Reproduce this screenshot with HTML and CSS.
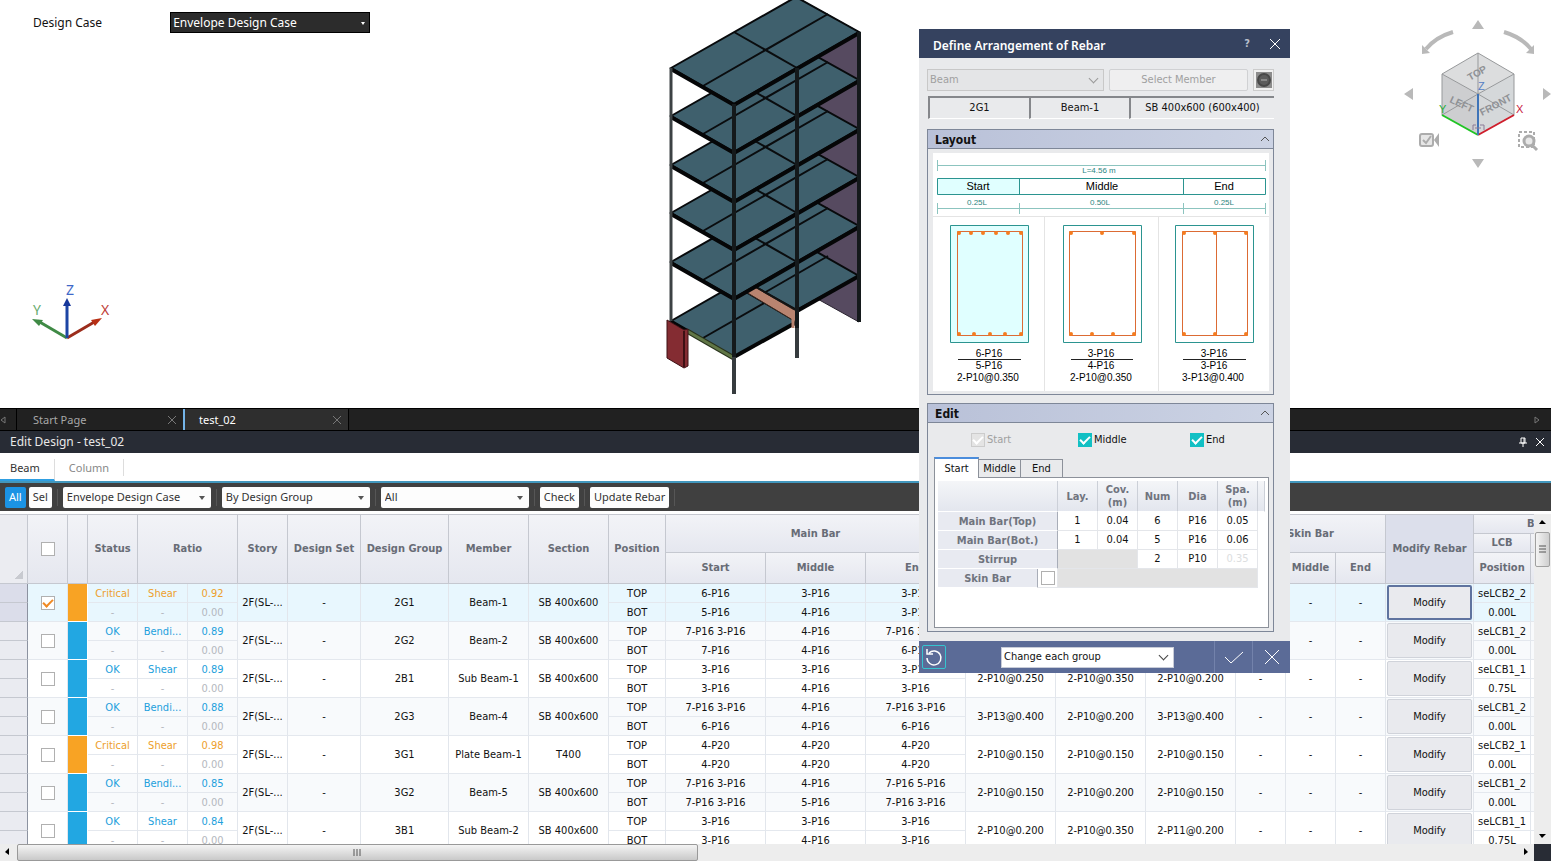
FILE: index.html
```html
<!DOCTYPE html>
<html lang="en">
<head>
<meta charset="utf-8">
<title>Edit Design - test_02</title>
<link rel="stylesheet" href="styles.css">
</head>
<body>
<main class="app">
  <section class="viewport" aria-label="Model view">
    <div class="case-bar">
      <label for="case-top">Design Case</label>
      <span class="drop drop-dark"><select id="case-top"><option>Envelope Design Case</option></select></span>
    </div>

    <svg class="axis" width="90" height="64" viewBox="0 0 90 64">
      <path d="M39 58L10 41" stroke="#3f8a45" stroke-width="3"/><path d="M4 39l11 1-4 6z" fill="#3f8a45"/>
      <path d="M39 58L68 41" stroke="#9c2d1c" stroke-width="3"/><path d="M74 38l-11 2 4 6z" fill="#b82f14"/>
      <path d="M39 58V25" stroke="#1d45a4" stroke-width="3"/><path d="M39 18l4 8h-8z" fill="#16379b"/>
      <text x="38" y="15" fill="#4068c8">Z</text><text x="5" y="35" fill="#68ac70">Y</text><text x="73" y="35" fill="#c04038">X</text>
    </svg>

    <svg class="model" width="250" height="400" viewBox="640 0 250 400">
      <defs>
        <g id="slab">
          <path d="M671 68L796 -3L859 32L734 104Z" fill="#3f606d" stroke="#080a0c" stroke-width="2"/>
          <path d="M703 86L828 14M734 32L797 68" stroke="#0a0c0e" stroke-width="2"/>
          <path d="M671 69L734 105L859 33" fill="none" stroke="#050607" stroke-width="4"/>
        </g>
      </defs>
      <path d="M796 -3L859 32V322L796 287Z" fill="#564a60" stroke="#2a2430"/>
      <path d="M671 321L734 285L797 322L734 357Z" fill="#3f606d" stroke="#080a0c" stroke-width="2"/>
      <path d="M703 338L766 302" stroke="#0a0c0e" stroke-width="2"/>
      <path d="M734 357L797 322" stroke="#050607" stroke-width="4"/>
      <path d="M671 321L690 332" stroke="#050607" stroke-width="3"/>
      <path d="M734 275L796 240L859 276L797 310Z" fill="#3f606d" stroke="#080a0c" stroke-width="2"/>
      <path d="M764 293L828 256" stroke="#0a0c0e" stroke-width="2"/>
      <path d="M797 311L859 276" stroke="#050607" stroke-width="4"/>
      <path d="M746 292L755 287L796 311V322Z" fill="#b98470" stroke="#3a2820"/>
      <path d="M793 310V328" stroke="#b98470" stroke-width="3"/>
      <path d="M754 286L796 310" stroke="#141414" stroke-width="2"/>
      <path d="M687 331L734 358" stroke="#28331c" stroke-width="5"/><path d="M687 331L734 358" stroke="#607646" stroke-width="3"/>
      <use href="#slab" y="194"/><use href="#slab" y="145"/><use href="#slab" y="97"/><use href="#slab" y="48"/><use href="#slab"/>
      <path d="M671 68V321" stroke="#3c4244" stroke-width="3"/>
      <path d="M734 104V357M797 68V330M859 32V322" stroke="#14191b" stroke-width="4"/>
      <path d="M734 357V394M797 328V358" stroke="#363b3e" stroke-width="4"/>
      <path d="M667 320L684 330L688 329V366L684 368L667 358Z" fill="#842c32" stroke="#3d1014"/><path d="M684 331V367" stroke="#3d1014" stroke-width="2"/>
    </svg>

    <svg class="cube" width="161" height="180" viewBox="1390 0 161 180">
      <g fill="#b9b9b9">
        <path d="M1478 20l6 9h-12zM1478 168l6-9h-12zM1404 94l9-6v12zM1551 94l-8-6v12z"/>
        <path d="M1422 54v-9l8 8zM1534 54v-9l-8 8z"/>
      </g>
      <path d="M1453 32Q1436 37 1426 49M1504 32Q1521 37 1531 49" fill="none" stroke="#b9b9b9" stroke-width="4"/>
      <path d="M1478 53L1514 74L1478 94L1442 74Z" fill="#dcddde"/>
      <path d="M1442 74L1478 94V135L1442 115Z" fill="#cdced0"/><path d="M1514 74L1478 94V135L1514 115Z" fill="#d5d8da"/>
      <path d="M1478 53L1514 74V115M1478 53L1442 74V115M1442 74L1478 94L1514 74M1478 53V94L1442 115M1478 94L1514 115" fill="none" stroke="#97999b"/>
      <g class="face"><text transform="translate(1470 81) rotate(-30)">TOP</text><text transform="translate(1449 102) rotate(25)">LEFT</text><text transform="translate(1482 116) rotate(-28)">FRONT</text></g>
      <path d="M1442 115L1478 135" stroke="#20c424" stroke-width="2"/><path d="M1478 135L1514 115" stroke="#cf1e2c" stroke-width="2"/><path d="M1478 94V135" stroke="#3f74b8" stroke-width="2"/>
      <path d="M1473 130v-5h3M1480 125h4v5M1475 128h6" fill="none" stroke="#8a7a96"/>
      <g class="cube-axis"><text x="1478" y="90" fill="#5580c4">Z</text><text x="1439" y="113" fill="#28ac38">Y</text><text x="1516" y="113" fill="#c82040">X</text></g>
      <rect x="1420" y="134" width="13" height="12" rx="2" fill="#e6e6e6" stroke="#acacac" stroke-width="2"/><path d="M1423 140l3 3 5-7" fill="none" stroke="#acacac" stroke-width="2"/><path d="M1434 140l5-7v14z" fill="#acacac"/>
      <path d="M1519 132h15v15h-15z" fill="none" stroke="#acacac" stroke-width="2" stroke-dasharray="3 2"/><circle cx="1529" cy="141" r="5" fill="#e8e8e8" stroke="#acacac" stroke-width="3"/><path d="M1532 145l5 5" stroke="#acacac" stroke-width="3"/>
    </svg>
  </section>

  <section class="dock">
    <nav class="doc-tabs">
      <button class="nudge" aria-label="Scroll left"><svg width="6" height="8" viewBox="0 0 6 8"><path d="M5 1v6L1 4z"/></svg></button>
      <div class="doc-tab"><a href="#start">Start Page</a><button aria-label="Close Start Page"><svg width="8" height="8" viewBox="0 0 8 8"><path d="M0 0l8 8M8 0L0 8"/></svg></button></div>
      <div class="doc-tab active"><a href="#test">test_02</a><button aria-label="Close test_02"><svg width="8" height="8" viewBox="0 0 8 8"><path d="M0 0l8 8M8 0L0 8"/></svg></button></div>
      <button class="nudge right" aria-label="Scroll right"><svg width="6" height="8" viewBox="0 0 6 8"><path d="M1 1v6l4-3z"/></svg></button>
    </nav>
    <header class="panel-title">
      <h1>Edit Design - test_02</h1>
      <button aria-label="Pin"><svg width="8" height="10" viewBox="0 0 8 10"><path d="M2 1h4v5H2zM5 1v5M0 6h8M4 6v4"/></svg></button>
      <button aria-label="Close panel"><svg width="8" height="8" viewBox="0 0 8 8"><path d="M0 0l8 8M8 0L0 8"/></svg></button>
    </header>
    <nav class="kind-tabs"><a class="on" href="#beam">Beam</a><a href="#column">Column</a></nav>
    <div class="toolbar">
      <button class="on">All</button><button>Sel</button><i></i>
      <span class="drop"><select aria-label="Design case"><option>Envelope Design Case</option></select></span><i></i>
      <span class="drop"><select aria-label="Grouping"><option>By Design Group</option></select></span><i></i>
      <span class="drop"><select aria-label="Filter"><option>All</option></select></span><i></i>
      <button>Check</button><i></i><button>Update Rebar</button><i></i>
    </div>

    <div class="grid-area">
      <div class="grid-clip">
      <table class="grid">
        <colgroup><col class="w28"><col class="w40"><col class="w20"><col class="w50" span="4"><col class="w73"><col class="w88"><col class="w80" span="2"><col class="w57"><col class="w100" span="3"><col class="w90" span="3"><col class="w50" span="3"><col class="w88"><col class="w57"><col class="w100"></colgroup>
        <thead>
          <tr><th rowspan="3" class="corner"></th><th rowspan="3"><input type="checkbox" aria-label="Select all"></th><th rowspan="3"></th><th rowspan="3">Status</th><th rowspan="3" colspan="2">Ratio</th><th rowspan="3">Story</th><th rowspan="3">Design Set</th><th rowspan="3">Design Group</th><th rowspan="3">Member</th><th rowspan="3">Section</th><th rowspan="3">Position</th><th rowspan="2" colspan="3">Main Bar</th><th rowspan="2" colspan="3"></th><th rowspan="2" colspan="3">Skin Bar</th><th rowspan="3" class="mod">Modify Rebar</th><th colspan="2" class="mid-cut">B</th></tr>
          <tr><th>LCB</th><th></th></tr>
          <tr class="sub"><th>Start</th><th>Middle</th><th>End</th><th></th><th></th><th></th><th></th><th>Middle</th><th>End</th><th>Position</th><th></th></tr>
        </thead>
        <tbody class="crit picked">
          <tr><td class="rh"></td><td rowspan="2"><input type="checkbox" checked aria-label="2G1"></td><td rowspan="2" class="flag"></td><td class="st">Critical</td><td class="st">Shear</td><td class="st">0.92</td><td rowspan="2">2F(SL-...</td><td rowspan="2">-</td><td rowspan="2">2G1</td><td rowspan="2">Beam-1</td><td rowspan="2">SB 400x600</td><td>TOP</td><td>6-P16</td><td>3-P16</td><td>3-P16</td><td rowspan="2"></td><td rowspan="2"></td><td rowspan="2"></td><td rowspan="2"></td><td rowspan="2">-</td><td rowspan="2">-</td><td rowspan="2" class="act"><button>Modify</button></td><td>seLCB2_2</td><td></td></tr>
          <tr><td class="rh"></td><td class="no">-</td><td class="no">-</td><td class="no">0.00</td><td>BOT</td><td>5-P16</td><td>4-P16</td><td>3-P16</td><td>0.00L</td><td></td></tr>
        </tbody>
        <tbody>
          <tr><td class="rh"></td><td rowspan="2"><input type="checkbox" aria-label="2G2"></td><td rowspan="2" class="flag"></td><td class="st">OK</td><td class="st">Bendi...</td><td class="st">0.89</td><td rowspan="2">2F(SL-...</td><td rowspan="2">-</td><td rowspan="2">2G2</td><td rowspan="2">Beam-2</td><td rowspan="2">SB 400x600</td><td>TOP</td><td>7-P16 3-P16</td><td>4-P16</td><td>7-P16 3-P16</td><td rowspan="2"></td><td rowspan="2"></td><td rowspan="2"></td><td rowspan="2"></td><td rowspan="2">-</td><td rowspan="2">-</td><td rowspan="2" class="act"><button>Modify</button></td><td>seLCB1_2</td><td></td></tr>
          <tr><td class="rh"></td><td class="no">-</td><td class="no">-</td><td class="no">0.00</td><td>BOT</td><td>7-P16</td><td>4-P16</td><td>6-P16</td><td>0.00L</td><td></td></tr>
        </tbody>
        <tbody>
          <tr><td class="rh"></td><td rowspan="2"><input type="checkbox" aria-label="2B1"></td><td rowspan="2" class="flag"></td><td class="st">OK</td><td class="st">Shear</td><td class="st">0.89</td><td rowspan="2">2F(SL-...</td><td rowspan="2">-</td><td rowspan="2">2B1</td><td rowspan="2">Sub Beam-1</td><td rowspan="2">SB 400x600</td><td>TOP</td><td>3-P16</td><td>3-P16</td><td>3-P16</td><td rowspan="2">2-P10@0.250</td><td rowspan="2">2-P10@0.350</td><td rowspan="2">2-P10@0.200</td><td rowspan="2">-</td><td rowspan="2">-</td><td rowspan="2">-</td><td rowspan="2" class="act"><button>Modify</button></td><td>seLCB1_1</td><td></td></tr>
          <tr><td class="rh"></td><td class="no">-</td><td class="no">-</td><td class="no">0.00</td><td>BOT</td><td>3-P16</td><td>4-P16</td><td>3-P16</td><td>0.75L</td><td></td></tr>
        </tbody>
        <tbody>
          <tr><td class="rh"></td><td rowspan="2"><input type="checkbox" aria-label="2G3"></td><td rowspan="2" class="flag"></td><td class="st">OK</td><td class="st">Bendi...</td><td class="st">0.88</td><td rowspan="2">2F(SL-...</td><td rowspan="2">-</td><td rowspan="2">2G3</td><td rowspan="2">Beam-4</td><td rowspan="2">SB 400x600</td><td>TOP</td><td>7-P16 3-P16</td><td>4-P16</td><td>7-P16 3-P16</td><td rowspan="2">3-P13@0.400</td><td rowspan="2">2-P10@0.200</td><td rowspan="2">3-P13@0.400</td><td rowspan="2">-</td><td rowspan="2">-</td><td rowspan="2">-</td><td rowspan="2" class="act"><button>Modify</button></td><td>seLCB1_2</td><td></td></tr>
          <tr><td class="rh"></td><td class="no">-</td><td class="no">-</td><td class="no">0.00</td><td>BOT</td><td>6-P16</td><td>4-P16</td><td>6-P16</td><td>0.00L</td><td></td></tr>
        </tbody>
        <tbody class="crit">
          <tr><td class="rh"></td><td rowspan="2"><input type="checkbox" aria-label="3G1"></td><td rowspan="2" class="flag"></td><td class="st">Critical</td><td class="st">Shear</td><td class="st">0.98</td><td rowspan="2">2F(SL-...</td><td rowspan="2">-</td><td rowspan="2">3G1</td><td rowspan="2">Plate Beam-1</td><td rowspan="2">T400</td><td>TOP</td><td>4-P20</td><td>4-P20</td><td>4-P20</td><td rowspan="2">2-P10@0.150</td><td rowspan="2">2-P10@0.150</td><td rowspan="2">2-P10@0.150</td><td rowspan="2">-</td><td rowspan="2">-</td><td rowspan="2">-</td><td rowspan="2" class="act"><button>Modify</button></td><td>seLCB2_1</td><td></td></tr>
          <tr><td class="rh"></td><td class="no">-</td><td class="no">-</td><td class="no">0.00</td><td>BOT</td><td>4-P20</td><td>4-P20</td><td>4-P20</td><td>0.00L</td><td></td></tr>
        </tbody>
        <tbody>
          <tr><td class="rh"></td><td rowspan="2"><input type="checkbox" aria-label="3G2"></td><td rowspan="2" class="flag"></td><td class="st">OK</td><td class="st">Bendi...</td><td class="st">0.85</td><td rowspan="2">2F(SL-...</td><td rowspan="2">-</td><td rowspan="2">3G2</td><td rowspan="2">Beam-5</td><td rowspan="2">SB 400x600</td><td>TOP</td><td>7-P16 3-P16</td><td>4-P16</td><td>7-P16 5-P16</td><td rowspan="2">2-P10@0.150</td><td rowspan="2">2-P10@0.200</td><td rowspan="2">2-P10@0.150</td><td rowspan="2">-</td><td rowspan="2">-</td><td rowspan="2">-</td><td rowspan="2" class="act"><button>Modify</button></td><td>seLCB1_2</td><td></td></tr>
          <tr><td class="rh"></td><td class="no">-</td><td class="no">-</td><td class="no">0.00</td><td>BOT</td><td>7-P16 3-P16</td><td>5-P16</td><td>7-P16 3-P16</td><td>0.00L</td><td></td></tr>
        </tbody>
        <tbody>
          <tr><td class="rh"></td><td rowspan="2"><input type="checkbox" aria-label="3B1"></td><td rowspan="2" class="flag"></td><td class="st">OK</td><td class="st">Shear</td><td class="st">0.84</td><td rowspan="2">2F(SL-...</td><td rowspan="2">-</td><td rowspan="2">3B1</td><td rowspan="2">Sub Beam-2</td><td rowspan="2">SB 400x600</td><td>TOP</td><td>3-P16</td><td>3-P16</td><td>3-P16</td><td rowspan="2">2-P10@0.200</td><td rowspan="2">2-P10@0.350</td><td rowspan="2">2-P11@0.200</td><td rowspan="2">-</td><td rowspan="2">-</td><td rowspan="2">-</td><td rowspan="2" class="act"><button>Modify</button></td><td>seLCB1_1</td><td></td></tr>
          <tr><td class="rh"></td><td class="no">-</td><td class="no">-</td><td class="no">0.00</td><td>BOT</td><td>3-P16</td><td>4-P16</td><td>3-P16</td><td>0.75L</td><td></td></tr>
        </tbody>
      </table>
      </div>
      <div class="vbar">
        <svg width="17" height="14" viewBox="0 0 17 14"><path d="M5 10h7L8 6z"/></svg>
        <div class="thumb"><svg width="7" height="9" viewBox="0 0 7 9"><path d="M0 1h7M0 4h7M0 7h7" stroke="#555"/></svg></div>
        <svg class="end" width="17" height="14" viewBox="0 0 17 14"><path d="M5 4h7L8 8z"/></svg>
      </div>
      <div class="hbar">
        <svg width="17" height="16" viewBox="0 0 17 16"><path d="M9 4v7L5 8z"/></svg>
        <div class="track"><div class="thumb"><svg width="9" height="7" viewBox="0 0 9 7"><path d="M1 0v7M4 0v7M7 0v7" stroke="#555"/></svg></div></div>
        <svg width="17" height="16" viewBox="0 0 17 16"><path d="M7 4v7l4-3z"/></svg>
      </div>
      <div class="grip"></div>
    </div>
  </section>

  <div class="dialog" role="dialog" aria-labelledby="dlg-title">
    <header class="dlg-head"><h2 id="dlg-title">Define Arrangement of Rebar</h2>
      <button class="help" aria-label="Help">?</button>
      <button aria-label="Close"><svg width="10" height="10" viewBox="0 0 10 10"><path d="M0 0l10 10M10 0L0 10" stroke="#fff"/></svg></button>
    </header>
    <div class="dlg-body">
      <div class="member-row">
        <span class="drop chev"><select disabled aria-label="Member type"><option>Beam</option></select></span>
        <button class="pick" disabled>Select Member</button>
        <button class="remove" disabled aria-label="Remove"><svg width="16" height="16" viewBox="0 0 16 16"><path fill="#8c8c8c" d="M0 0h16v16H0z"/><circle cx="8" cy="8" r="7" fill="#484848"/><circle cx="8" cy="8" r="5" fill="#5c5c5c"/><path d="M5 8h6" stroke="#888" stroke-width="2"/></svg></button>
      </div>
      <div class="info"><span>2G1</span><span>Beam-1</span><span>SB 400x600 (600x400)</span></div>

      <section class="group">
        <h3>Layout<svg width="8" height="5" viewBox="0 0 8 5"><path d="M0 5l4-4 4 4"/></svg></h3>
        <svg class="drawing" width="336" height="238" viewBox="0 0 336 238">
          <path class="dim" d="M4 12.5H333M4.500 7v11M332.500 7v11"/>
          <path fill="#e0ffff" d="M4 25h83v17H4z"/>
          <path class="teal" d="M4.500 25.500h328v16h-328zM86.500 25v17M250.500 25v17"/>
          <path class="dim" d="M4 55.500H333M4.500 50v11M86.500 50v11M250.500 50v11M332.500 50v11"/>
          <g class="tiny"><text x="166" y="20">L=4.56 m</text><text x="44" y="52">0.25L</text><text x="167" y="52">0.50L</text><text x="291" y="52">0.25L</text></g>
          <g class="part"><text x="45" y="37">Start</text><text x="169" y="37">Middle</text><text x="291" y="37">End</text></g>
          <path d="M0 63.500h336M111.500 64v174M225.500 64v174" stroke="#e4e4e4"/>
          <path class="teal lit" d="M17.500 72.500h78v117h-78z"/>
          <path class="teal" d="M130.500 72.500h78v117h-78zM242.500 72.500h78v117h-78z"/>
          <path d="M24.500 78.500h65v104h-65zM136.500 78.500h66v104h-66zM249.500 78.500h65v104h-65zM283.500 78v104" fill="none" stroke="#dc6b34"/>
          <g fill="#f57c1f">
            <circle cx="26" cy="80" r="2"/><circle cx="38" cy="80" r="2"/><circle cx="50" cy="80" r="2"/><circle cx="63" cy="80" r="2"/><circle cx="75" cy="80" r="2"/><circle cx="88" cy="80" r="2"/>
            <circle cx="26" cy="181" r="2"/><circle cx="41" cy="181" r="2"/><circle cx="57" cy="181" r="2"/><circle cx="72" cy="181" r="2"/><circle cx="88" cy="181" r="2"/>
            <circle cx="138" cy="80" r="2"/><circle cx="169" cy="80" r="2"/><circle cx="201" cy="80" r="2"/><circle cx="138" cy="181" r="2"/><circle cx="159" cy="181" r="2"/><circle cx="180" cy="181" r="2"/><circle cx="201" cy="181" r="2"/>
            <circle cx="251" cy="80" r="2"/><circle cx="282" cy="80" r="2"/><circle cx="313" cy="80" r="2"/><circle cx="251" cy="181" r="2"/><circle cx="282" cy="181" r="2"/><circle cx="313" cy="181" r="2"/>
          </g>
          <path d="M25 206.500h63M138 206.500h62M250 206.500h63" stroke="#222"/>
          <g class="bars"><text x="56" y="204">6-P16</text><text x="56" y="216">5-P16</text><text x="55" y="228">2-P10@0.350</text><text x="168" y="204">3-P16</text><text x="168" y="216">4-P16</text><text x="168" y="228">2-P10@0.350</text><text x="281" y="204">3-P16</text><text x="281" y="216">3-P16</text><text x="280" y="228">3-P13@0.400</text></g>
        </svg>
      </section>

      <section class="group edit">
        <h3>Edit<svg width="8" height="5" viewBox="0 0 8 5"><path d="M0 5l4-4 4 4"/></svg></h3>
        <div class="checks"><label class="dim-label"><input type="checkbox" checked disabled>Start</label><label><input type="checkbox" checked>Middle</label><label><input type="checkbox" checked>End</label></div>
        <div class="tabs" role="tablist"><button role="tab" class="on">Start</button><button role="tab">Middle</button><button role="tab">End</button></div>
        <div class="sheet">
          <table>
            <colgroup><col class="w100"><col class="w20"><col class="w40" span="5"><col></colgroup>
            <thead><tr><th colspan="2"></th><th>Lay.</th><th>Cov.<br>(m)</th><th>Num</th><th>Dia</th><th>Spa.<br>(m)</th><th></th></tr></thead>
            <tbody>
              <tr><th colspan="2">Main Bar(Top)</th><td>1</td><td>0.04</td><td>6</td><td>P16</td><td>0.05</td></tr>
              <tr><th colspan="2">Main Bar(Bot.)</th><td>1</td><td>0.04</td><td>5</td><td>P16</td><td>0.06</td></tr>
              <tr><th colspan="2">Stirrup</th><td class="off" colspan="2"></td><td>2</td><td>P10</td><td class="faint">0.35</td></tr>
              <tr><th><label for="skin">Skin Bar</label></th><td class="box"><input type="checkbox" id="skin"></td><td class="off" colspan="5"></td></tr>
            </tbody>
          </table>
        </div>
      </section>
    </div>
    <footer class="dlg-foot">
      <button class="undo" aria-label="Reset"><svg width="18" height="18" viewBox="0 0 18 18"><path d="M4 5A7 7 0 1 1 2 10M2 1v5h6" fill="none" stroke="#fff" stroke-width="1.500"/></svg></button>
      <span class="drop chev"><select aria-label="Apply mode"><option>Change each group</option></select></span>
      <button class="cmd" aria-label="Apply"><svg width="18" height="13" viewBox="0 0 18 13"><path d="M0 6l6 6L18 1"/></svg></button>
      <button class="cmd" aria-label="Cancel"><svg width="14" height="14" viewBox="0 0 14 14"><path d="M0 0l14 14M14 0L0 14"/></svg></button>
    </footer>
  </div>
</main>
</body>
</html>
```
FILE: styles.css
```css
* { box-sizing: border-box; }
body { margin: 0; background: #fff; color: #111; font: 11px/14px "DejaVu Sans Condensed", "Noto Sans", sans-serif; }
button, select, input { font: inherit; color: inherit; margin: 0; }
button { padding: 0; border: 0; background: none; }
a { color: inherit; text-decoration: none; }
h1, h2, h3 { margin: 0; font: inherit; }
svg { display: block; overflow: visible; }

.app { position: relative; height: 100vh; display: grid; grid-template-rows: minmax(0, 408fr) minmax(0, 455fr); grid-template-columns: minmax(0, 1fr); overflow: hidden; }

/* drop-downs */
.drop { position: relative; display: inline-flex; }
.drop select { width: 100%; appearance: none; border: 0; border-radius: 0; outline: 0; background: none; padding: 0 4px; opacity: 1; }
.drop::after { content: ""; position: absolute; right: 6px; top: calc(50% - 1px); border: 3px solid transparent; border-top: 4px solid #555; border-bottom: 0; pointer-events: none; }
.drop.chev::after { width: 6px; height: 6px; border: solid #444; border-width: 0 1px 1px 0; transform: translateY(-4px) rotate(45deg); }
.drop-dark { width: 200px; height: 21px; background: #2c2c2c; border: 1px solid #000; color: #fff; }
.drop-dark select { padding: 0 2px; }
.drop-dark::after { right: 4px; border-width: 3px 2px 0; border-top-color: #fff; }

/* 3D view */
.viewport { position: relative; background: #fff; overflow: hidden; }
.case-bar { display: flex; align-items: center; gap: 68px; padding: 12px 33px; font: 12px/18px "Noto Sans", sans-serif; }
.axis { position: absolute; left: 28px; top: 280px; font: 14px "Noto Sans", sans-serif; }
.model { position: absolute; left: 640px; top: 0; }
.cube { position: absolute; right: 0; top: 0; }
.face { font: bold 10px "Liberation Sans", sans-serif; fill: #8f9195; }
.cube-axis { font: 11px "Liberation Sans", sans-serif; }

/* dock */
.dock { display: flex; flex-direction: column; }
.doc-tabs { display: flex; height: 23px; background: #212121; border-top: 1px solid #000; border-bottom: 1px solid #000; color: #a8a8a8; font: 11px/20px "Noto Sans", sans-serif; }
.doc-tabs svg path { fill: none; stroke: #777; }
.nudge { width: 17px; border-right: 1px solid #000; display: flex; align-items: center; }
.nudge.right { margin-left: auto; border: 0; }
.doc-tab { width: 166px; display: flex; align-items: center; justify-content: space-between; padding: 0 7px 0 16px; }
.doc-tab.active { background: #2e2e2e; color: #fff; border-left: 2px solid #74b4e8; border-right: 1px solid #000; padding-left: 14px; }
.panel-title { display: flex; align-items: center; gap: 9px; height: 22px; padding: 0 7px 0 10px; background: #282c35; color: #e8e8e8; font: 12px/20px "Noto Sans", sans-serif; }
.panel-title h1 { flex: 1; }
.panel-title path { fill: none; stroke: #fff; }
.kind-tabs { display: flex; height: 30px; padding-top: 6px; border-bottom: 2px solid #4297bd; color: #888; font: 11px/18px "Noto Sans", sans-serif; }
.kind-tabs a { padding: 0 14px; margin-bottom: 5px; border-right: 1px solid #ddd; }
.kind-tabs a.on { padding: 0 14px 0 10px; margin-bottom: 0; color: #333; border-bottom: 2px solid #2f9fe2; }
.toolbar { display: flex; align-items: center; gap: 5px; height: 28px; padding-left: 5px; background: #404040; color: #333; font: 11px/18px "Noto Sans", sans-serif; }
.toolbar button { height: 21px; padding: 0 4px; background: #fdfdfd; border-radius: 2px; white-space: nowrap; }
.toolbar button.on { background: #1b93e4; color: #fff; margin-right: -2px; }
.toolbar i { width: 1px; height: 17px; background: #565656; }
.toolbar .drop { width: 148px; height: 21px; background: #fdfdfd; border-radius: 2px; }

/* results grid */
.grid-area { flex: 1; min-height: 0; margin: 3px 0 2px; display: grid; grid-template: minmax(0, 1fr) 17px / minmax(0, 1fr) 17px; }
.grid-clip { overflow: hidden; }
.grid { table-layout: fixed; width: 1631px; border-collapse: separate; border-spacing: 0; border-top: 1px solid #c5c7cf; }
.w20 { width: 20px; } .w28 { width: 28px; } .w40 { width: 40px; } .w50 { width: 50px; } .w57 { width: 57px; } .w73 { width: 73px; } .w80 { width: 80px; } .w88 { width: 88px; } .w90 { width: 90px; } .w100 { width: 100px; }
.grid th { height: 19px; padding: 0; background: linear-gradient(#f2f3f7, #e5e7ef); border-right: 1px solid #c5c8d0; border-bottom: 1px solid #c5c8d0; color: #686c76; font-weight: bold; white-space: nowrap; overflow: hidden; }
.grid .sub th { height: 31px; }
.grid .corner { background: linear-gradient(135deg, transparent 50%, #c8cad0 50%) right 4px bottom 4px / 8px 8px no-repeat, #ebecf1; }
.grid .mod { background: #dcdfeb; }
.grid .mid-cut { text-align: left; padding-left: 53px; }
.grid td { height: 19px; padding: 0; text-align: center; border-right: 1px solid #e2e6ec; border-bottom: 1px solid #e4e8ee; white-space: nowrap; overflow: hidden; background: #fff; line-height: 13px; }
.grid tbody:nth-of-type(even) td { background: #f8fafc; }
.grid .picked td { background: #e8f7fe; }
.grid tbody td.rh { background: #eaebf1; border-color: #c5c8d0; border-right-color: #8c92a0; }
.grid .picked td.rh { background: #dbddea; }
.grid tbody td.flag { background: #22a7e2; border-color: #fff; }
.grid .crit td.flag { background: #f8a324; }
.grid .st { color: #22a0dc; }
.grid .crit .st { color: #eda02c; }
.grid .no { color: #b4b8be; }
.grid tbody td.act { padding: 1px; }
.act button { display: block; width: 100%; height: 35px; background: #e9eaee; border: 1px solid #d0d3da; border-radius: 2px; }
.picked .act button { border: 2px solid #5f739f; }

input[type="checkbox"] { appearance: none; width: 14px; height: 14px; border: 1px solid #b0b0b0; background: #fff; vertical-align: middle; display: inline-grid; place-items: center; }
input[type="checkbox"]:checked::before { content: ""; width: 8px; height: 4px; border: solid #f08a24; border-width: 0 0 2px 2px; transform: translateY(-1px) rotate(-45deg); }

/* scroll bars */
.vbar { display: flex; flex-direction: column; background: #ededed; }
.vbar .thumb { height: 35px; margin: 4px 1px; border: 1px solid #a0a0a0; border-radius: 2px; background: linear-gradient(90deg, #f4f4f4, #cfcfcf); display: grid; place-items: center; }
.vbar .end { margin-top: auto; }
.hbar { display: flex; background: #ededed; }
.hbar .track { flex: 1; display: flex; }
.hbar .thumb { width: 681px; border: 1px solid #999; border-radius: 2px; background: linear-gradient(#f4f4f4, #c9c9c9); display: grid; place-items: center; }
.grip { background: #282c35; }

/* rebar dialog floats over the view and the dock */
.dialog { position: absolute; left: 919px; top: 29px; width: 371px; background: #e9eaec; }
.dlg-head { display: flex; align-items: center; gap: 20px; height: 29px; padding: 0 10px 0 14px; background: #35425f; color: #fff; }
.dlg-head h2 { flex: 1; padding-top: 4px; font: 600 12px/18px "Noto Sans", sans-serif; }
.dlg-head .help { font-weight: bold; color: #b8bfcc; }
.dlg-body { padding: 11px 16px 9px 8px; }
.member-row { display: flex; gap: 5px; height: 22px; color: #a0a0a0; }
.member-row .drop { width: 177px; border: 1px solid #c8c8c8; background: #e4e5e7; }
.member-row .drop::after { border-color: #999; }
.member-row .drop select { padding: 0 2px; }
.pick { flex: 1; border: 1px solid #d0d1d3; border-radius: 2px; background: #efeff0; }
.remove { width: 21px; border: 1px solid #ccc; display: grid; place-items: center; background: #f0f0f0; }
.info { display: grid; grid-template-columns: 101px 100px 1fr; margin: 5px 0 10px 1px; height: 23px; }
.info span { border-top: 2px solid #85878b; border-left: 2px solid #85878b; border-bottom: 1px solid #fff; text-align: center; line-height: 20px; }
.group { border: 1px solid #7e8798; margin-bottom: 8px; }
.group h3 { display: flex; justify-content: space-between; padding: 2px 4px 0 7px; height: 19px; background: linear-gradient(90deg, #b9c1d8, #ccd3e4); border-bottom: 1px solid #7e8798; font: bold 12px/16px "DejaVu Sans Condensed", sans-serif; }
.group h3 svg { margin-top: 4px; }
.group h3 path { fill: none; stroke: #555; }
.drawing { margin: 4px 5px 3px; background: #fff; font-family: "Liberation Sans", sans-serif; text-anchor: middle; }
.dim { fill: none; stroke: #8cc4bf; }
.teal { fill: none; stroke: #2b9490; }
.lit { fill: #e0ffff; }
.tiny { font-size: 8px; fill: #2b8580; }
.part { font-size: 11px; }
.bars { font-size: 10px; }
.edit { margin-bottom: 0; }
.checks { display: flex; height: 33px; align-items: center; padding-left: 43px; }
.checks label { display: flex; align-items: center; gap: 2px; flex: 0 0 112px; }
.checks label:first-child { flex-basis: 107px; }
.checks label:last-child { flex-basis: auto; }
.checks input { background: #12c0c4; border-color: #12c0c4; }
.checks input:checked::before { border-color: #fff; }
.checks .dim-label { color: #a0a0a0; }
.checks .dim-label input { background: #e4e4e4; border-color: #ccc; }
.tabs { display: flex; align-items: flex-end; height: 21px; padding-left: 6px; }
.tabs button { width: 42px; height: 18px; border: 1px solid #8c919a; border-width: 1px 1px 0 0; }
.tabs button.on { width: 45px; height: 21px; background: #fff; border-top: 2px solid #4b8ddc; border-left-width: 1px; margin-bottom: -1px; }
.sheet { height: 151px; margin: 0 4px 3px 6px; padding: 3px; border: 1px solid #8c919a; background: #fff; }
.sheet table { width: 100%; table-layout: fixed; border-collapse: separate; border-spacing: 0; }
.sheet th { padding: 0; background: #e8eaf1; color: #70747e; border-bottom: 1px solid #fff; border-right: 1px solid #a8adb8; line-height: 13px; }
.sheet thead th { height: 31px; background: linear-gradient(#f4f5f8, #e3e6ee); border-right-color: #ccd0d8; }
.sheet td { height: 19px; padding: 0; text-align: center; border-right: 1px solid #e4e6ea; border-bottom: 1px solid #e4e6ea; line-height: 14px; }
.sheet .off { background: #e2e2e2; }
.sheet .faint { color: #dcdee0; }
.sheet .box { line-height: 0; }
.dlg-foot { display: flex; align-items: center; height: 32px; padding-left: 3px; background: #5b6b97; }
.undo { width: 24px; height: 24px; border: 1px solid #35c4d0; border-radius: 2px; display: grid; place-items: center; }
.dlg-foot .drop { width: 173px; height: 21px; margin: 0 auto 0 55px; background: #fff; border: 1px solid #c8ccd8; }
.dlg-foot .drop select { padding: 0 2px; }
.cmd { width: 38px; height: 100%; border-left: 1px solid #7382ab; display: grid; place-items: center; }
.cmd path { fill: none; stroke: #fff; }
```
